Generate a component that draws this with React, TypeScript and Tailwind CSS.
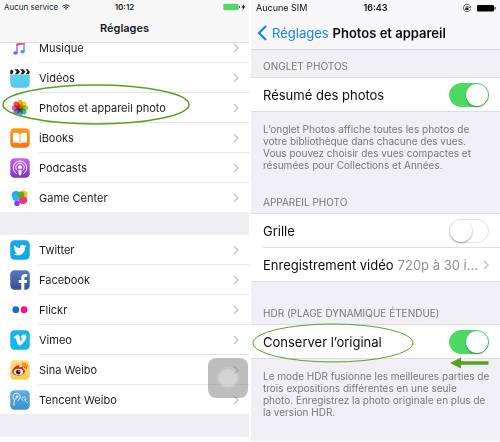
import type { ReactNode } from 'react';
import { FaFacebookF, FaTwitter, FaVimeoV, FaWeibo } from 'react-icons/fa';

function Tile({ children, fill, stroke }: { children?: ReactNode; fill: string; stroke?: string }) {
  return (
    <svg viewBox="0 0 20 20" className="size-5 shrink-0" aria-hidden="true">
      <defs>
        <linearGradient id="g-video" x1="0" y1="0" x2="0" y2="1">
          <stop offset="0" stopColor="#5fe3cf" />
          <stop offset="1" stopColor="#4fc3f3" />
        </linearGradient>
        <linearGradient id="g-books" x1="0" y1="0" x2="0" y2="1">
          <stop offset="0" stopColor="#ff9f12" />
          <stop offset="1" stopColor="#fb701c" />
        </linearGradient>
        <linearGradient id="g-pod" x1="0" y1="0" x2="0" y2="1">
          <stop offset="0" stopColor="#cb63ea" />
          <stop offset="1" stopColor="#7c2fc4" />
        </linearGradient>
        <linearGradient id="g-fb" x1="0" y1="0" x2="0" y2="1">
          <stop offset="0" stopColor="#5479c0" />
          <stop offset="1" stopColor="#344f93" />
        </linearGradient>
        <linearGradient id="g-weibo" x1="0" y1="0" x2="0" y2="1">
          <stop offset="0" stopColor="#ffe07e" />
          <stop offset="1" stopColor="#fbcb50" />
        </linearGradient>
        <linearGradient id="g-tencent" x1="0" y1="0" x2="0" y2="1">
          <stop offset="0" stopColor="#5bb0e6" />
          <stop offset="1" stopColor="#3b8fd0" />
        </linearGradient>
      </defs>
      <rect x="0.25" y="0.25" width="19.5" height="19.5" rx="4.2" fill={fill} stroke={stroke} strokeWidth="0.5" />
      {children}
    </svg>
  );
}

const MusicIcon = () => (
  <Tile fill="#fff" stroke="#e6e6ea">
    <path d="M7 15V6" stroke="#b04ce0" strokeWidth="1.3" />
    <path d="M14 13.500V5" stroke="#5b7cf0" strokeWidth="1.300" />
    <path d="M6.400 5.400 14.700 4v2.300L6.400 7.700z" fill="#fb4a72" />
    <ellipse cx="5.500" cy="15" rx="2.200" ry="1.800" fill="#8450f6" />
    <ellipse cx="12.500" cy="13.800" rx="2.200" ry="1.800" fill="#36a2f5" />
  </Tile>
);

const VideoIcon = () => (
  <Tile fill="url(#g-video)">
    <rect x="0" y="0" width="20" height="6.600" fill="#fff" />
    <path
      d="M.3 2.500 1.800 1.500 3.600 3.800 2 6.200H.3zM4.600 1.200h3.200l2.300 2.600L7.800 6.200H4.800l2-2.500zM10 1.200h3.200l2.300 2.600-2.300 2.400h-3l2-2.500zM15.400 1.200h2.300l2 2.600v1l-1.100 1.400h-3l2-2.500z"
      fill="#1c1c1e"
    />
  </Tile>
);

const petals = ['#fba41f', '#e6d22a', '#a3ca3c', '#52b788', '#5b9bdc', '#9273c4', '#d4639a', '#ef5340'];
const PhotosIcon = () => (
  <Tile fill="#fff" stroke="#e9e9ed">
    {petals.map((color, i) => (
      <ellipse
        key={color}
        cx="10"
        cy="5.700"
        rx="2.700"
        ry="4"
        fill={color}
        className="mix-blend-multiply"
        transform={`rotate(${i * 45} 10 10)`}
      />
    ))}
  </Tile>
);

const BooksIcon = () => (
  <Tile fill="url(#g-books)">
    <path d="M9.600 6C8 4.400 5 4.400 3 5v9.800c2.300-.6 5-.5 6.600.8zM10.400 6c1.600-1.600 4.600-1.600 6.600-1v9.800c-2.300-.6-5-.5-6.600.8z" fill="#fff" />
  </Tile>
);

const PodcastIcon = () => (
  <Tile fill="url(#g-pod)">
    <g fill="none" stroke="#fff" strokeWidth="1">
      <path d="M6.800 15.800a6.800 6.800 0 1 1 6.400 0" />
      <path d="M7.300 12.600a4.200 4.200 0 1 1 5.400 0" />
    </g>
    <circle cx="10" cy="9.300" r="2" fill="#fff" />
    <path d="M8.200 12.400q1.800-.9 3.600 0l-.7 4.600q-1.100.8-2.200 0z" fill="#fff" />
  </Tile>
);

const GameIcon = () => (
  <Tile fill="#fff" stroke="#e9e9ed">
    <circle cx="13.500" cy="6.500" r="3.900" fill="#e9c81c" />
    <circle cx="6" cy="7.200" r="4.100" fill="#21a9f3" />
    <circle cx="5.800" cy="9.800" r="3.300" fill="#23b9f5" />
    <ellipse cx="11" cy="6.600" rx="3.400" ry="3.200" fill="#5cab1c" />
    <ellipse cx="13" cy="12.200" rx="4.200" ry="3.700" fill="#fb2f7b" />
    <circle cx="7" cy="15.200" r="2.800" fill="#9a36f2" />
  </Tile>
);

const TwitterIcon = () => (
  <Tile fill="#12a9ea">
    <FaTwitter x={3.5} y={3.5} size={13} color="#fff" />
  </Tile>
);

const FacebookIcon = () => (
  <Tile fill="url(#g-fb)">
    <FaFacebookF x={5} y={4} size={16} color="#fff" />
  </Tile>
);

const FlickrIcon = () => (
  <Tile fill="#fff" stroke="#e6e6ea">
    <circle cx="5.800" cy="9.700" r="3.400" fill="#1c66d6" />
    <circle cx="14" cy="9.700" r="3.400" fill="#ff0f84" />
  </Tile>
);

const VimeoIcon = () => (
  <Tile fill="#12b7ea">
    <FaVimeoV x={3} y={3} size={14} color="#fff" stroke="#fff" strokeWidth={20} />
  </Tile>
);

const WeiboIcon = () => (
  <Tile fill="url(#g-weibo)">
    <FaWeibo x={2} y={2.5} size={15} color="#e0252b" />
    <path d="M12 5q3.500-1 4 3M12.500 2.800q5-.8 5.500 4.700" fill="none" stroke="#f49a1e" strokeWidth="1.100" />
    <ellipse cx="8.600" cy="12" rx="4.500" ry="3" fill="#fff" />
    <circle cx="8.300" cy="12.100" r="2.300" fill="#1d1310" />
    <circle cx="9" cy="11.300" r="0.700" fill="#fff" />
  </Tile>
);

const TencentIcon = () => (
  <Tile fill="url(#g-tencent)">
    <g fill="none" stroke="#fff" strokeWidth="0.900" strokeLinecap="round">
      <path d="M4 15.500C3.400 12.500 4.300 9.500 6.400 7.600M3.600 9.200A3.700 3.700 0 1 1 8 10.400" />
      <circle cx="7" cy="6.700" r="0.900" fill="#fff" />
      <path d="M12.600 10.600a2.100 2.100 0 1 1 2.200 .3M14.400 9.300l3 3.200" strokeWidth="0.700" />
    </g>
  </Tile>
);

function Chevron({ className = '' }: { className?: string }) {
  return (
    <svg viewBox="0 0 6 10" className={`h-[10px] w-[6px] shrink-0 ${className}`} aria-hidden="true">
      <path d="M1 1l4 4-4 4" fill="none" stroke="#c2c2c7" strokeWidth="1.300" />
    </svg>
  );
}

function Ring({ className, width }: { className: string; width: number }) {
  return (
    <svg className={`pointer-events-none absolute z-10 overflow-visible ${className}`} aria-hidden="true">
      <ellipse cx="50%" cy="50%" rx="50%" ry="50%" fill="none" stroke="#5ba025" strokeWidth={width} />
    </svg>
  );
}

function AppRow({ icon, label, children }: { icon: ReactNode; label: string; children?: ReactNode }) {
  return (
    <li className="group relative">
      <button type="button" className="flex w-full items-center gap-[9px] pl-[10px] text-left">
        {icon}
        <span className="flex h-[30px] flex-1 items-center justify-between border-b border-[#e6e6ea] pr-[10px] group-last:h-[29px] group-last:border-b-0">
          {label}
          <Chevron />
        </span>
      </button>
      {children}
    </li>
  );
}

function SettingsScreen() {
  return (
    <section className="min-w-0 flex-1 bg-white text-[11px] leading-4 text-[#1b1b1d]">
      <header className="relative z-20 h-[43px] border-b border-[#dcdcdf] bg-[#f7f7f8]">
        <div className="relative flex h-[14px] items-center justify-between pr-[3px] pl-1 text-[8px]">
          <span className="flex items-center gap-1">
            Aucun service
            <svg viewBox="0 0 16 12" className="h-[6px] w-2" aria-hidden="true">
              <path d="M1 4.500Q8-1.500 15 4.500M3.500 7.500q4.500-4 9 0" fill="none" stroke="#222" strokeWidth="2" />
              <path d="M5.800 9.500q2.200-1.800 4.400 0L8 12z" fill="#222" />
            </svg>
          </span>
          <time className="absolute inset-x-0 text-center font-semibold">10:12</time>
          <svg viewBox="0 0 23 8" className="h-2 w-[23px]" aria-hidden="true">
            <rect x="0.500" y="1" width="15" height="6" rx="1" fill="#4cd964" stroke="#9fb8a3" strokeWidth="0.500" />
            <path d="M16.200 3h.8v2h-.8z" fill="#333" />
            <path d="M21.200 1 18.300 4.500h1.700L19.400 7l3-3.500h-1.700z" fill="#111" />
          </svg>
        </div>
        <h1 className="pt-[6px] text-center font-semibold">Réglages</h1>
      </header>
      <ul className="-mt-[10px]">
        <AppRow icon={<MusicIcon />} label="Musique" />
        <AppRow icon={<VideoIcon />} label="Vidéos" />
        <AppRow icon={<PhotosIcon />} label="Photos et appareil photo">
          <Ring className="-top-2 left-[3px] h-[39px] w-[186px]" width={1.5} />
        </AppRow>
        <AppRow icon={<BooksIcon />} label="iBooks" />
        <AppRow icon={<PodcastIcon />} label="Podcasts" />
        <AppRow icon={<GameIcon />} label="Game Center" />
      </ul>
      <ul className="border-y-[23px] border-[#eeeef3]">
        <AppRow icon={<TwitterIcon />} label="Twitter" />
        <AppRow icon={<FacebookIcon />} label="Facebook" />
        <AppRow icon={<FlickrIcon />} label="Flickr" />
        <AppRow icon={<VimeoIcon />} label="Vimeo" />
        <AppRow icon={<WeiboIcon />} label="Sina Weibo">
          <button
            type="button"
            aria-label="AssistiveTouch"
            className="absolute top-[3px] right-px z-10 flex size-10 items-center justify-center rounded-lg bg-[#7b7b7b]/50"
          >
            <span className="flex size-[22px] items-center justify-center rounded-full bg-white/15">
              <span className="size-[18px] rounded-full bg-white/25" />
            </span>
          </button>
        </AppRow>
        <AppRow icon={<TencentIcon />} label="Tencent Weibo" />
      </ul>
    </section>
  );
}

function ToggleRow({ label, on = false, children }: { label: string; on?: boolean; children?: ReactNode }) {
  return (
    <div className="relative">
      <label className="flex h-[33px] items-center justify-between pr-[11px]">
        {label}
        <input
          type="checkbox"
          defaultChecked={on}
          className="flex h-6 w-10 shrink-0 appearance-none items-center rounded-full border border-[#e3e3e6] bg-white before:size-[22px] before:rounded-full before:bg-white before:shadow-[0_1px_2px_rgba(0,0,0,0.4)] checked:justify-end checked:border-[#4cd964] checked:bg-[#4cd964]"
        />
      </label>
      {children}
    </div>
  );
}

function Group({ title, note, children }: { title: string; note?: string; children: ReactNode }) {
  return (
    <section>
      <h2 className="px-3 pb-[3px] text-[10px] leading-4 text-[#77777c]">{title}</h2>
      <div className="border-y border-[#dedee2] bg-white pl-3">{children}</div>
      {note && <p className="pt-[11px] pl-3 text-[10px] leading-[12px] whitespace-pre-line text-[#77777c]">{note}</p>}
    </section>
  );
}

function PhotosScreen() {
  return (
    <section className="mb-px min-w-0 flex-1 bg-[#efeff4] text-[13px] leading-4 text-[#0c0c0e]">
      <header className="h-[50px] border-b border-[#d8d8dc] bg-[#f7f7f9]">
        <div className="relative flex h-4 items-center justify-between pr-1 pl-[5px] text-[9px]">
          <span>Aucune SIM</span>
          <time className="absolute inset-x-0 text-center font-semibold">16:43</time>
          <svg viewBox="0 0 34 10" className="h-[10px] w-[34px]" aria-hidden="true">
            <path d="M7.600 2.400A3.600 3.600 0 1 0 8.500 6M8.800 2.800l-.5 2-1.700-.9" fill="none" stroke="#444" strokeWidth="0.900" />
            <rect x="3.300" y="4.600" width="3.200" height="2.400" fill="#222" />
            <path d="M4 4.700V3.900a.9.900 0 0 1 1.800 0v.8" fill="none" stroke="#222" strokeWidth="0.600" />
            <rect x="15" y="2" width="17" height="6.500" rx="1.200" fill="#000" />
            <path d="M32.500 4h1v2.500h-1z" fill="#000" />
          </svg>
        </div>
        <div className="flex h-[33px] items-center gap-1 pl-[6px] whitespace-nowrap">
          <a href="#reglages" className="flex items-center gap-[5px] text-[#1683fb]">
            <svg viewBox="0 0 10 16" className="h-4 w-[10px]" aria-hidden="true">
              <path d="M9 1 2 8l7 7" fill="none" stroke="#1683fb" strokeWidth="2.200" />
            </svg>
            Réglages
          </a>
          <h1 className="font-semibold">Photos et appareil</h1>
        </div>
      </header>
      <div className="flex flex-col gap-[23px] pt-2 pb-[23px]">
        <Group
          title="ONGLET PHOTOS"
          note={'L’onglet Photos affiche toutes les photos de\nvotre bibliothèque dans chacune des vues.\nVous pouvez choisir des vues compactes et\nrésumées pour Collections et Années.'}
        >
          <ToggleRow label="Résumé des photos" on />
        </Group>
        <Group title="APPAREIL PHOTO">
          <ToggleRow label="Grille" />
          <button
            type="button"
            className="flex h-[34px] w-full items-center border-t border-[#dedee2] pr-[11px] text-left whitespace-nowrap"
          >
            Enregistrement vidéo
            <span className="ml-1 text-[#8e8e93]">720p à 30 i...</span>
            <Chevron className="ml-auto" />
          </button>
        </Group>
        <Group
          title="HDR (PLAGE DYNAMIQUE ÉTENDUE)"
          note={'Le mode HDR fusionne les meilleures parties de\ntrois expositions différentes en une seule\nphoto. Enregistrez la photo originale en plus de\nla version HDR.'}
        >
          <ToggleRow label="Conserver l’original" on>
            <Ring className="-top-[1px] -left-[10px] h-[38px] w-[160px]" width={1} />
            <svg viewBox="0 0 40 12" className="absolute right-[11px] -bottom-[11px] z-10 h-3 w-10" aria-hidden="true">
              <path d="M1 6 12 .5v3.700h27.500v3.600H12v3.700z" fill="#5a9e24" />
            </svg>
          </ToggleRow>
        </Group>
      </div>
    </section>
  );
}

export default function App() {
  return (
    <main className="flex gap-[2px] bg-white font-['Inter','Liberation_Sans',sans-serif]">
      <SettingsScreen />
      <PhotosScreen />
    </main>
  );
}
